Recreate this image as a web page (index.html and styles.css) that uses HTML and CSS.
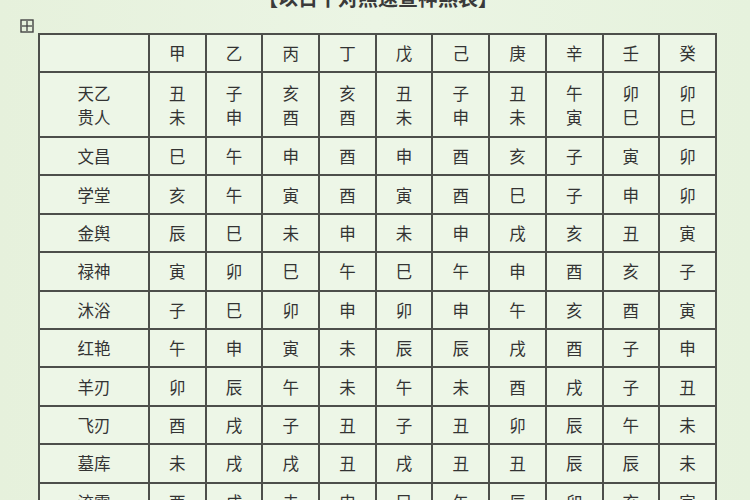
FILE: index.html
```html
<!DOCTYPE html>
<html lang="zh">
<head>
<meta charset="utf-8">
<link rel="stylesheet" href="styles.css">
</head>
<body>
<div class="page">
  <div class="title">【以日干对照速查神煞表】</div>
  <div class="wrap">
    <span class="handle"><svg width="14" height="14" viewBox="0 0 14 14"><rect x="1" y="1" width="12" height="12" fill="none" stroke="#444" stroke-width="1.4"/><line x1="7" y1="2" x2="7" y2="12" stroke="#444" stroke-width="1.3"/><line x1="2" y1="7" x2="12" y2="7" stroke="#444" stroke-width="1.3"/></svg></span>
    <table class="grid">
      <colgroup><col class="c-name"><col span="10"></colgroup>
      <tr class="r-head"><td></td><td>甲</td><td>乙</td><td>丙</td><td>丁</td><td>戊</td><td>己</td><td>庚</td><td>辛</td><td>壬</td><td>癸</td></tr>
      <tr class="r-two"><td>天乙<br>贵人</td><td>丑<br>未</td><td>子<br>申</td><td>亥<br>酉</td><td>亥<br>酉</td><td>丑<br>未</td><td>子<br>申</td><td>丑<br>未</td><td>午<br>寅</td><td>卯<br>巳</td><td>卯<br>巳</td></tr>
      <tr><td>文昌</td><td>巳</td><td>午</td><td>申</td><td>酉</td><td>申</td><td>酉</td><td>亥</td><td>子</td><td>寅</td><td>卯</td></tr>
      <tr><td>学堂</td><td>亥</td><td>午</td><td>寅</td><td>酉</td><td>寅</td><td>酉</td><td>巳</td><td>子</td><td>申</td><td>卯</td></tr>
      <tr><td>金舆</td><td>辰</td><td>巳</td><td>未</td><td>申</td><td>未</td><td>申</td><td>戌</td><td>亥</td><td>丑</td><td>寅</td></tr>
      <tr><td>禄神</td><td>寅</td><td>卯</td><td>巳</td><td>午</td><td>巳</td><td>午</td><td>申</td><td>酉</td><td>亥</td><td>子</td></tr>
      <tr><td>沐浴</td><td>子</td><td>巳</td><td>卯</td><td>申</td><td>卯</td><td>申</td><td>午</td><td>亥</td><td>酉</td><td>寅</td></tr>
      <tr><td>红艳</td><td>午</td><td>申</td><td>寅</td><td>未</td><td>辰</td><td>辰</td><td>戌</td><td>酉</td><td>子</td><td>申</td></tr>
      <tr><td>羊刃</td><td>卯</td><td>辰</td><td>午</td><td>未</td><td>午</td><td>未</td><td>酉</td><td>戌</td><td>子</td><td>丑</td></tr>
      <tr><td>飞刃</td><td>酉</td><td>戌</td><td>子</td><td>丑</td><td>子</td><td>丑</td><td>卯</td><td>辰</td><td>午</td><td>未</td></tr>
      <tr><td>墓库</td><td>未</td><td>戌</td><td>戌</td><td>丑</td><td>戌</td><td>丑</td><td>丑</td><td>辰</td><td>辰</td><td>未</td></tr>
      <tr><td>流霞</td><td>酉</td><td>戌</td><td>未</td><td>申</td><td>巳</td><td>午</td><td>辰</td><td>卯</td><td>亥</td><td>寅</td></tr>
    </table>
  </div>
</div>
</body>
</html>
```
FILE: styles.css
```css
html, body {
  margin: 0;
  padding: 0;
  background: #e7f2de;
  overflow: hidden;
}
.page {
  width: 750px;
  height: 500px;
  overflow: hidden;
  background: linear-gradient(90deg, #e6f1dc 0%, #ebf5e4 50%, #e6f2dd 100%);
  font-family: "Noto Sans CJK SC", "Noto Sans CJK JP", sans-serif;
  color: #333;
}
.title {
  height: 20px;
  margin-top: -12px;
  text-align: center;
  font-family: "Noto Sans CJK SC", serif;
  font-weight: 700;
  font-size: 20px;
  line-height: 20px;
  color: #3a3a3a;
  padding-left: 6px;
}
.wrap {
  position: relative;
  margin-top: 25px;
  padding-left: 38px;
}
.handle {
  position: absolute;
  left: 20px;
  top: -14px;
  line-height: 0;
}
.grid {
  border-collapse: collapse;
  table-layout: fixed;
  width: 679px;
}
.grid col.c-name { width: 110px; }
.grid td {
  border: 2px solid #4d4f4b;
  background: #edf6e7;
  text-align: center;
  vertical-align: middle;
  font-size: 16.5px;
  line-height: 24px;
  height: 36.4px;
  padding: 0;
}
.grid .r-head td { height: 36px; }
.grid .r-two td { height: 63px; }
```
